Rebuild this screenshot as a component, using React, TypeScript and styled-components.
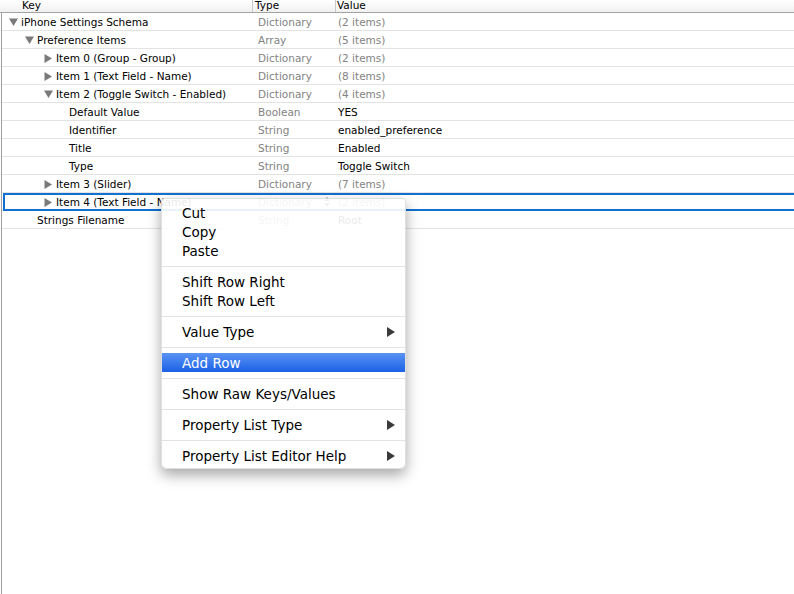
import styled, { createGlobalStyle } from "styled-components";

const GlobalStyle = createGlobalStyle`
  html, body {
    margin: 0;
    padding: 0;
    background: #ffffff;
  }
  body {
    font-family: "DejaVu Sans", "Liberation Sans", sans-serif;
    -webkit-font-smoothing: antialiased;
  }
`;

const Page = styled.div`
  position: relative;
  width: 794px;
  height: 594px;
  overflow: hidden;
  background: #ffffff;
`;

const Header = styled.div`
  display: grid;
  grid-template-columns: 252px 83px 1fr;
  height: 12px;
  border-bottom: 1px solid #a3a3a3;
  background: linear-gradient(#ffffff, #f1f1f1);
  overflow: hidden;
`;

const HeaderCell = styled.div<{ $pad: number }>`
  padding-left: ${(p) => p.$pad}px;
  font-size: 10.5px;
  line-height: 11px;
  color: #000;
  border-left: 1px solid #c8c8c8;
  &:first-child {
    border-left: none;
  }
`;

const Body = styled.div`
  margin-left: 1px;
  border-left: 1px solid #a0a0a0;
  height: 581px;
`;

const Row = styled.div<{ $selected?: boolean }>`
  display: grid;
  grid-template-columns: 251px 83px 1fr;
  height: 18px;
  box-sizing: border-box;
  padding-top: 1px;
  border-bottom: 1px solid #e3e3e3;
  align-items: center;
  font-size: 10.5px;
  position: relative;
  ${(p) =>
    p.$selected &&
    `
    &::after {
      content: "";
      position: absolute;
      left: 1px;
      right: -4px;
      top: 0;
      bottom: -1px;
      border: 2px solid #1170d0;
    }
  `}
`;

const KeyCell = styled.div<{ $indent: number }>`
  display: flex;
  align-items: center;
  padding-left: ${(p) => p.$indent}px;
  color: #000;
  white-space: nowrap;
  overflow: hidden;
`;

const Toggle = styled.span`
  display: inline-flex;
  width: 12px;
  flex: none;
  align-items: center;
`;

const TypeCell = styled.div`
  padding-left: 5px;
  color: #838383;
  white-space: nowrap;
  display: flex;
  align-items: center;
  justify-content: space-between;
  padding-right: 6px;
`;

const ValueCell = styled.div<{ $dark?: boolean }>`
  padding-left: 2px;
  color: ${(p) => (p.$dark ? "#000" : "#838383")};
  white-space: nowrap;
`;

const Menu = styled.div`
  position: absolute;
  left: 161px;
  top: 198px;
  width: 245px;
  padding: 4px 0 3px;
  box-sizing: border-box;
  background: rgba(255, 255, 255, 0.91);
  border: 1px solid rgba(0, 0, 0, 0.12);
  border-radius: 4px 4px 6px 6px;
  box-shadow: 0 6px 14px rgba(0, 0, 0, 0.35);
`;

const MenuItem = styled.div<{ $active?: boolean }>`
  display: flex;
  align-items: center;
  justify-content: space-between;
  height: 19px;
  padding: 0 10px 0 20px;
  font-size: 13.5px;
  color: ${(p) => (p.$active ? "#ffffff" : "#000000")};
  background: ${(p) =>
    p.$active ? "linear-gradient(#5a93f3, #1a61e6)" : "transparent"};
  white-space: nowrap;
`;

const Separator = styled.div`
  height: 12px;
  display: flex;
  align-items: center;
  &::before {
    content: "";
    flex: 1;
    height: 1px;
    background: #e2e2e2;
  }
`;

type Node = {
  level: number;
  toggle?: "down" | "right";
  key: string;
  type: string;
  value: string;
  dark?: boolean;
  selected?: boolean;
};

const indents = [7, 23, 42, 55];

const rows: Node[] = [
  { level: 0, toggle: "down", key: "iPhone Settings Schema", type: "Dictionary", value: "(2 items)" },
  { level: 1, toggle: "down", key: "Preference Items", type: "Array", value: "(5 items)" },
  { level: 2, toggle: "right", key: "Item 0 (Group - Group)", type: "Dictionary", value: "(2 items)" },
  { level: 2, toggle: "right", key: "Item 1 (Text Field - Name)", type: "Dictionary", value: "(8 items)" },
  { level: 2, toggle: "down", key: "Item 2 (Toggle Switch - Enabled)", type: "Dictionary", value: "(4 items)" },
  { level: 3, key: "Default Value", type: "Boolean", value: "YES", dark: true },
  { level: 3, key: "Identifier", type: "String", value: "enabled_preference", dark: true },
  { level: 3, key: "Title", type: "String", value: "Enabled", dark: true },
  { level: 3, key: "Type", type: "String", value: "Toggle Switch", dark: true },
  { level: 2, toggle: "right", key: "Item 3 (Slider)", type: "Dictionary", value: "(7 items)" },
  { level: 2, toggle: "right", key: "Item 4 (Text Field - Name)", type: "Dictionary", value: "(2 items)", selected: true },
  { level: 1, key: "Strings Filename", type: "String", value: "Root", dark: true },
];

function Triangle({ dir }: { dir: "down" | "right" }) {
  return dir === "down" ? (
    <svg width="9" height="8" viewBox="0 0 9 8">
      <path d="M0 0.5 L9 0.5 L4.5 8 Z" fill="#7a7a7a" />
    </svg>
  ) : (
    <svg width="8" height="9" viewBox="0 0 8 9">
      <path d="M0.5 0 L8 4.5 L0.5 9 Z" fill="#7a7a7a" />
    </svg>
  );
}

function Stepper() {
  return (
    <svg width="6" height="10" viewBox="0 0 6 10">
      <path d="M3 0 L6 4 L0 4 Z M0 6 L6 6 L3 10 Z" fill="#6a6a6a" />
    </svg>
  );
}

function SubArrow() {
  return (
    <svg width="8" height="10" viewBox="0 0 8 10">
      <path d="M0 0 L8 5 L0 10 Z" fill="#3a3a3a" />
    </svg>
  );
}

type MenuEntry = { label: string; sub?: boolean; active?: boolean } | "sep";

const menu: MenuEntry[] = [
  { label: "Cut" },
  { label: "Copy" },
  { label: "Paste" },
  "sep",
  { label: "Shift Row Right" },
  { label: "Shift Row Left" },
  "sep",
  { label: "Value Type", sub: true },
  "sep",
  { label: "Add Row", active: true },
  "sep",
  { label: "Show Raw Keys/Values" },
  "sep",
  { label: "Property List Type", sub: true },
  "sep",
  { label: "Property List Editor Help", sub: true },
];

export default function App() {
  return (
    <Page>
      <GlobalStyle />
      <Header>
        <HeaderCell $pad={22}>Key</HeaderCell>
        <HeaderCell $pad={2}>Type</HeaderCell>
        <HeaderCell $pad={1}>Value</HeaderCell>
      </Header>
      <Body>
        {rows.map((r, i) => (
          <Row key={i} $selected={r.selected}>
            <KeyCell $indent={indents[r.level]}>
              <Toggle>{r.toggle && <Triangle dir={r.toggle} />}</Toggle>
              {r.key}
            </KeyCell>
            <TypeCell>
              {r.type}
              {r.selected && <Stepper />}
            </TypeCell>
            <ValueCell $dark={r.dark}>{r.value}</ValueCell>
          </Row>
        ))}
      </Body>
      <Menu>
        {menu.map((m, i) =>
          m === "sep" ? (
            <Separator key={i} />
          ) : (
            <MenuItem key={i} $active={m.active}>
              {m.label}
              {m.sub && <SubArrow />}
            </MenuItem>
          )
        )}
      </Menu>
    </Page>
  );
}
